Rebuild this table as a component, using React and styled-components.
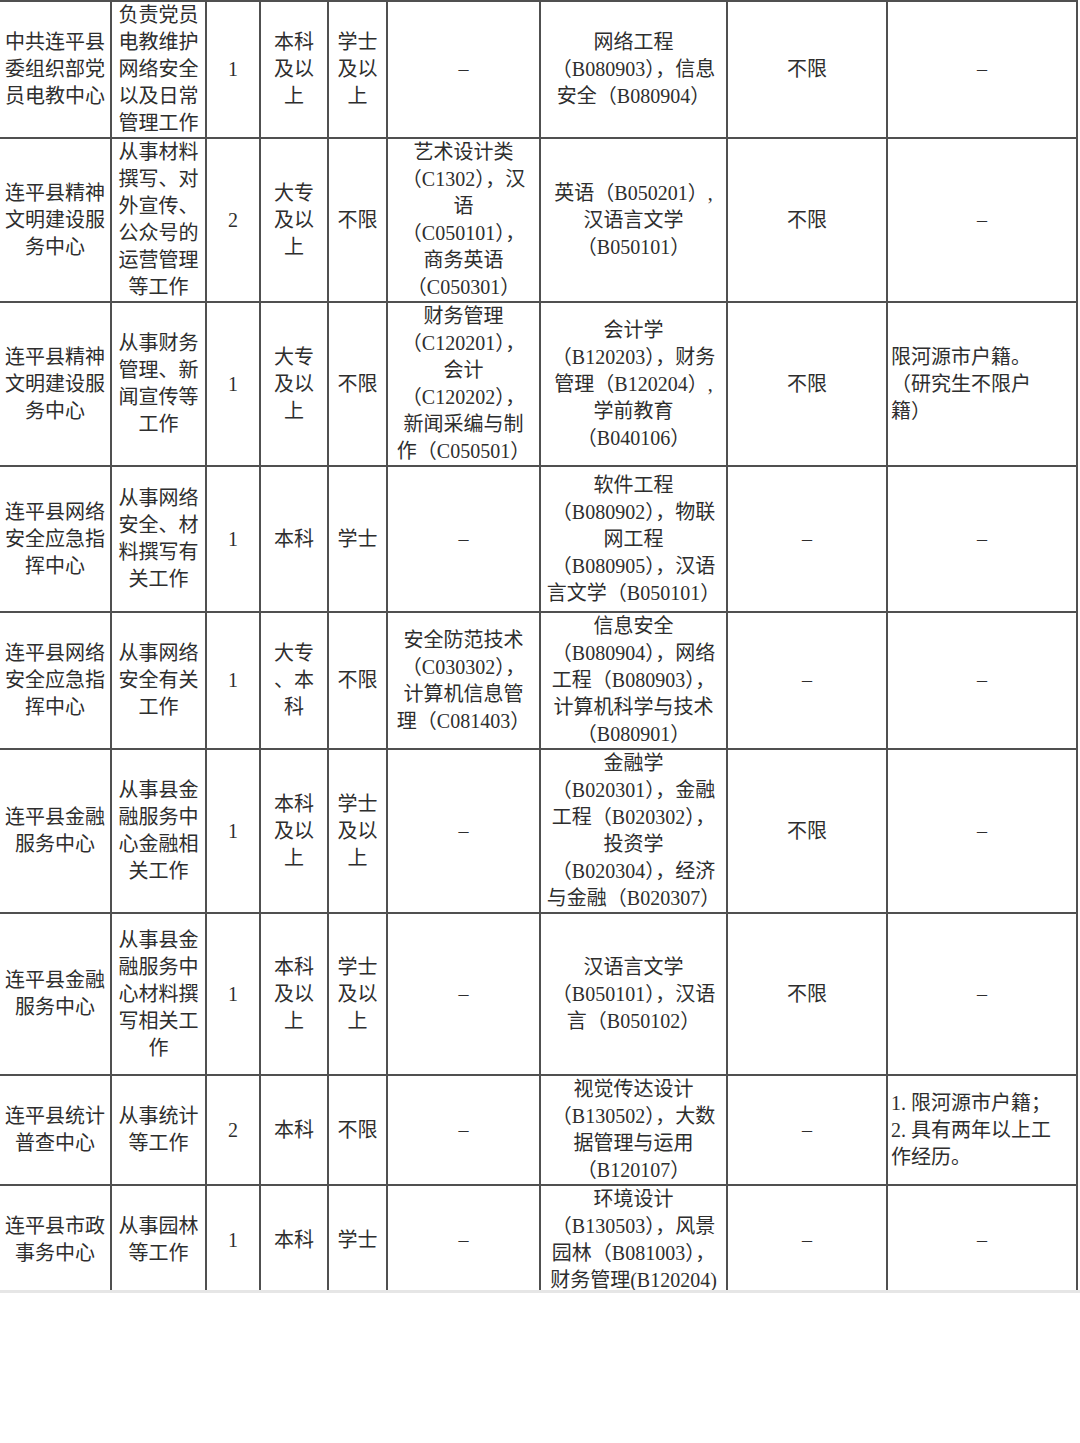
import React from 'react';
import styled, { createGlobalStyle } from 'styled-components';

const GlobalStyle = createGlobalStyle`
  html, body {
    margin: 0;
    padding: 0;
    background: #ffffff;
  }
  body {
    font-family: "Liberation Serif", "Noto Sans CJK SC", serif;
  }
`;

const Page = styled.div`
  width: 1080px;
  height: 1443px;
  background: #ffffff;
`;

const Sheet = styled.div`
  width: 1080px;
  height: 1290px;
  overflow: hidden;
`;

const Cutoff = styled.div`
  width: 1080px;
  height: 3px;
  background: #e6e6e6;
`;

const Table = styled.table`
  table-layout: fixed;
  border-collapse: separate;
  border-spacing: 0;
  width: 1078px;
  border-top: 2px solid #505050;
`;

const Row = styled.tr`
  height: ${(p) => p.$h}px;
`;

const Cell = styled.td`
  box-sizing: border-box;
  padding: ${(p) => (p.$align === 'left' ? '0 0 0 3px' : '0')};
  border-right: 2px solid #505050;
  border-bottom: 2px solid #505050;
  vertical-align: middle;
  text-align: ${(p) => p.$align || 'center'};
  color: #2e2e2e;
  font-size: 20px;
  line-height: 27px;
  overflow: hidden;
`;

const Line = styled.span`
  display: block;
  white-space: nowrap;
`;

const widths = [112, 95, 54, 68, 59, 153, 187, 160, 190];

const D = '–';

const rows = [
  {
    h: 136,
    cells: [
      ['中共连平县', '委组织部党', '员电教中心'],
      ['负责党员', '电教维护', '网络安全', '以及日常', '管理工作'],
      ['1'],
      ['本科', '及以', '上'],
      ['学士', '及以', '上'],
      [D],
      ['网络工程', '（B080903），信息', '安全（B080904）'],
      ['不限'],
      [D],
    ],
  },
  {
    h: 163,
    cells: [
      ['连平县精神', '文明建设服', '务中心'],
      ['从事材料', '撰写、对', '外宣传、', '公众号的', '运营管理', '等工作'],
      ['2'],
      ['大专', '及以', '上'],
      ['不限'],
      ['艺术设计类', '（C1302），汉', '语', '（C050101），', '商务英语', '（C050301）'],
      ['英语（B050201）,', '汉语言文学', '（B050101）'],
      ['不限'],
      [D],
    ],
  },
  {
    h: 162,
    left: 8,
    cells: [
      ['连平县精神', '文明建设服', '务中心'],
      ['从事财务', '管理、新', '闻宣传等', '工作'],
      ['1'],
      ['大专', '及以', '上'],
      ['不限'],
      ['财务管理', '（C120201），', '会计', '（C120202），', '新闻采编与制', '作（C050501）'],
      ['会计学', '（B120203），财务', '管理（B120204）,', '学前教育', '（B040106）'],
      ['不限'],
      ['限河源市户籍。', '（研究生不限户', '籍）'],
    ],
  },
  {
    h: 146,
    cells: [
      ['连平县网络', '安全应急指', '挥中心'],
      ['从事网络', '安全、材', '料撰写有', '关工作'],
      ['1'],
      ['本科'],
      ['学士'],
      [D],
      ['软件工程', '（B080902），物联', '网工程', '（B080905），汉语', '言文学（B050101）'],
      [D],
      [D],
    ],
  },
  {
    h: 137,
    cells: [
      ['连平县网络', '安全应急指', '挥中心'],
      ['从事网络', '安全有关', '工作'],
      ['1'],
      ['大专', '、本', '科'],
      ['不限'],
      ['安全防范技术', '（C030302），', '计算机信息管', '理（C081403）'],
      ['信息安全', '（B080904），网络', '工程（B080903），', '计算机科学与技术', '（B080901）'],
      [D],
      [D],
    ],
  },
  {
    h: 162,
    cells: [
      ['连平县金融', '服务中心'],
      ['从事县金', '融服务中', '心金融相', '关工作'],
      ['1'],
      ['本科', '及以', '上'],
      ['学士', '及以', '上'],
      [D],
      ['金融学', '（B020301），金融', '工程（B020302），', '投资学', '（B020304），经济', '与金融（B020307）'],
      ['不限'],
      [D],
    ],
  },
  {
    h: 162,
    cells: [
      ['连平县金融', '服务中心'],
      ['从事县金', '融服务中', '心材料撰', '写相关工', '作'],
      ['1'],
      ['本科', '及以', '上'],
      ['学士', '及以', '上'],
      [D],
      ['汉语言文学', '（B050101），汉语', '言（B050102）'],
      ['不限'],
      [D],
    ],
  },
  {
    h: 108,
    left: 8,
    cells: [
      ['连平县统计', '普查中心'],
      ['从事统计', '等工作'],
      ['2'],
      ['本科'],
      ['不限'],
      [D],
      ['视觉传达设计', '（B130502），大数', '据管理与运用', '（B120107）'],
      [D],
      ['1. 限河源市户籍；', '2. 具有两年以上工', '作经历。'],
    ],
  },
  {
    h: 108,
    cells: [
      ['连平县市政', '事务中心'],
      ['从事园林', '等工作'],
      ['1'],
      ['本科'],
      ['学士'],
      [D],
      ['环境设计', '（B130503），风景', '园林（B081003），', '财务管理(B120204)'],
      [D],
      [D],
    ],
  },
];

export default function App() {
  return (
    <Page>
      <GlobalStyle />
      <Sheet>
        <Table>
          <colgroup>
            {widths.map((w, i) => (
              <col key={i} style={{ width: w }} />
            ))}
          </colgroup>
          <tbody>
            {rows.map((row, r) => (
              <Row key={r} $h={row.h}>
                {row.cells.map((lines, c) => (
                  <Cell key={c} $align={row.left === c ? 'left' : 'center'}>
                    {lines.map((t, k) => (
                      <Line key={k}>{t}</Line>
                    ))}
                  </Cell>
                ))}
              </Row>
            ))}
          </tbody>
        </Table>
      </Sheet>
      <Cutoff />
    </Page>
  );
}
